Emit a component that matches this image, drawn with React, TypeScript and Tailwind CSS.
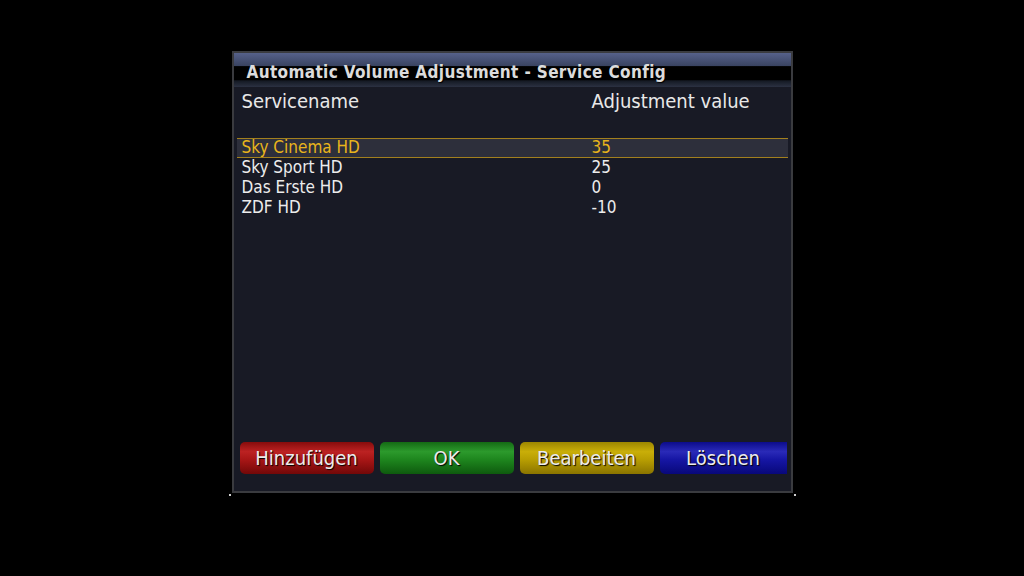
import React from 'react';

type Service = { name: string; value: string };

const services: Service[] = [
  { name: 'Sky Cinema HD', value: '35' },
  { name: 'Sky Sport HD', value: '25' },
  { name: 'Das Erste HD', value: '0' },
  { name: 'ZDF HD', value: '-10' },
];

const buttons = [
  { label: 'Hinzufügen', cls: 'bg-[linear-gradient(180deg,#860c0c_0%,#bc2222_30%,#a81616_55%,#720808_100%)] w-[134px]' },
  { label: 'OK', cls: 'bg-[linear-gradient(180deg,#146a14_0%,#2c9a2c_30%,#1e861e_55%,#0e5a0e_100%)] w-[134px]' },
  { label: 'Bearbeiten', cls: 'bg-[linear-gradient(180deg,#9c8600_0%,#c9ae08_30%,#b89e02_55%,#8a7400_100%)] w-[134px]' },
  { label: 'Löschen', cls: 'bg-[linear-gradient(180deg,#0c0c8a_0%,#2a2ab8_30%,#1616a4_55%,#08087a_100%)] w-[127px] rounded-r-none' },
];

export default function App() {
  return (
    <div className="w-[1024px] h-[576px] bg-black flex justify-center" style={{ fontFamily: '"DejaVu Sans Condensed", "DejaVu Sans", sans-serif' }}>
      <div className="mt-[51px] w-[561px] h-[442px] border-2 border-[#3a3b3f] bg-[#181a25] flex flex-col relative">
        {/* corner marks */}
        <div className="absolute left-[-5px] bottom-[-5px] w-[2px] h-[2px] bg-[#cfcfcf]" />
        <div className="absolute right-[-5px] bottom-[-5px] w-[2px] h-[2px] bg-[#cfcfcf]" />
        {/* title bar */}
        <div className="h-[34px] bg-[linear-gradient(180deg,#56618a_0%,#3a4462_37%,#000_40%,#000_78%,#151a24_82%,#2b3142_100%)] relative">
          <div className="absolute left-[13px] top-[7px] text-[17px] font-bold tracking-[0.35px] text-[#dcdcdc] [text-shadow:1px_1px_1px_#000]">
            Automatic Volume Adjustment - Service Config
          </div>
        </div>
        {/* header */}
        <div className="flex text-[20px] text-[#e8e8e8] h-[28px] items-center">
          <div className="pl-[8px] w-[358px]">Servicename</div>
          <div>Adjustment value</div>
        </div>
        {/* list */}
        <div className="mt-[23px] mx-[3px] flex flex-col text-[17px]">
          {services.map((s, i) => (
            <div
              key={s.name}
              className={
                i === 0
                  ? 'flex h-[20px] items-center bg-[#2d2f3b] border-y border-[#a2801e] text-[#e8b41c]'
                  : 'flex h-[20px] items-center text-[#ececec] border-y border-transparent'
              }
            >
              <div className="pl-[5px] w-[355px]">{s.name}</div>
              <div>{s.value}</div>
            </div>
          ))}
        </div>
        {/* buttons */}
        <div className="mt-auto mb-[17px] ml-[6px] flex gap-[6px]">
          {buttons.map((b) => (
            <div
              key={b.label}
              className={`h-[32px] rounded-[5px] flex items-center justify-center text-[20px] text-[#ececec] [text-shadow:1px_1px_1px_#000] ${b.cls}`}
            >
              {b.label}
            </div>
          ))}
        </div>
      </div>
    </div>
  );
}
